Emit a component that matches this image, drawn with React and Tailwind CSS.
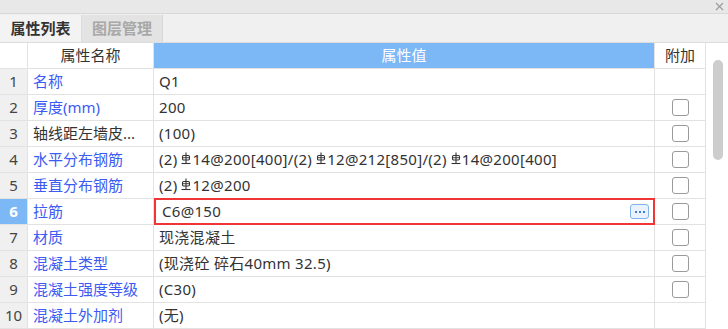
import React from "react";

const Steel = () => (
  <svg width="10" height="14" viewBox="0 0 10 14" className="inline-block align-[-1px] ml-[4px] mr-[1px]">
    <line x1="5" y1="0.5" x2="5" y2="11" stroke="#333" strokeWidth="1.1" />
    <rect x="1.5" y="3.5" width="7" height="4.5" rx="1.2" fill="none" stroke="#333" strokeWidth="1.1" />
    <line x1="1.5" y1="5.7" x2="8.5" y2="5.7" stroke="#333" strokeWidth="0.9" />
    <line x1="0.5" y1="11.5" x2="9.5" y2="11.5" stroke="#333" strokeWidth="1.1" />
  </svg>
);

const rows = [
  { n: "1", name: "名称", blue: true, value: "Q1", cb: false },
  { n: "2", name: "厚度(mm)", blue: true, value: "200", cb: true },
  { n: "3", name: "轴线距左墙皮...", blue: false, value: "(100)", cb: true },
  {
    n: "4",
    name: "水平分布钢筋",
    blue: true,
    value: (
      <>
        (2)<Steel />14@200[400]/(2)<Steel />12@212[850]/(2)<Steel />14@200[400]
      </>
    ),
    cb: true,
  },
  { n: "5", name: "垂直分布钢筋", blue: true, value: (<>(2)<Steel />12@200</>), cb: true },
  { n: "6", name: "拉筋", blue: true, value: "C6@150", cb: true, sel: true },
  { n: "7", name: "材质", blue: true, value: "现浇混凝土", cb: true },
  { n: "8", name: "混凝土类型", blue: true, value: "(现浇砼 碎石40mm 32.5)", cb: true },
  { n: "9", name: "混凝土强度等级", blue: true, value: "(C30)", cb: true },
  { n: "10", name: "混凝土外加剂", blue: true, value: "(无)", cb: false },
];

const Checkbox = () => (
  <div className="w-[17px] h-[17px] rounded-[3px] border border-[#9a9a9a] bg-white" />
);

export default function App() {
  return (
    <div className="w-[728px] h-[329px] overflow-hidden bg-white text-[15px] text-[#333] font-['Noto_Sans','Noto_Sans_CJK_SC',sans-serif] leading-none flex flex-col">
      {/* title bar */}
      <div className="h-[14px] bg-[#e8e8e8] border-b border-[#d8d8d8] flex items-center justify-end pr-[4px] shrink-0">
        <svg width="9" height="9" viewBox="0 0 9 9">
          <path d="M1 1L8 8M8 1L1 8" stroke="#9a9a9a" strokeWidth="1.1" />
        </svg>
      </div>
      {/* tabs */}
      <div className="h-[29px] bg-[#f0f0f0] border-b border-[#dcdcdc] flex items-stretch shrink-0 pt-[1px]">
        <div className="w-[82px] flex items-center justify-center font-bold text-[#333] bg-[#f3f3f3] border-r border-[#dcdcdc]">
          属性列表
        </div>
        <div className="w-[81px] flex items-center justify-center font-bold text-[#a8a8a8] bg-[#e3e3e3] border-r border-[#d6d6d6]">
          图层管理
        </div>
      </div>
      {/* table + scrollbar */}
      <div className="flex flex-1 min-h-0">
        <div className="w-[706px] flex flex-col">
          {/* header */}
          <div className="h-[26px] flex border-b border-[#e2e2e2] shrink-0">
            <div className="w-[28px] border-r border-[#e2e2e2] bg-white" />
            <div className="w-[126px] border-r border-[#e2e2e2] flex items-center justify-center text-[#333]">
              属性名称
            </div>
            <div className="w-[501px] bg-[#7db8f6] border-r border-[#e2e2e2] flex items-center justify-center text-white">
              属性值
            </div>
            <div className="w-[51px] flex items-center justify-center text-[#333] border-r border-[#e2e2e2]">
              附加
            </div>
          </div>
          {rows.map((r) => (
            <div key={r.n} className="h-[26px] flex border-b border-[#e2e2e2] shrink-0">
              <div
                className={
                  r.sel
                    ? "w-[28px] border-r border-[#e2e2e2] bg-[#7db8f6] text-white font-bold flex items-center justify-center"
                    : "w-[28px] border-r border-[#e2e2e2] bg-[#f0f0f0] text-[#444] flex items-center justify-center"
                }
              >
                {r.n}
              </div>
              <div
                className={
                  r.blue
                    ? "w-[126px] border-r border-[#e2e2e2] flex items-center pl-[5px] text-[#3b5bf2] whitespace-nowrap overflow-hidden"
                    : "w-[126px] border-r border-[#e2e2e2] flex items-center pl-[5px] text-[#333] whitespace-nowrap overflow-hidden"
                }
              >
                {r.name}
              </div>
              {r.sel ? (
                <div className="w-[501px] border-2 border-[#ef3535] -my-[1px] h-[27px] flex items-center justify-between pl-[6px] pr-[4px] bg-white tracking-[0.3px]">
                  <span>{r.value}</span>
                  <div className="w-[19px] h-[15px] rounded-[3px] border border-[#7fb3ef] bg-[#eaf3fd] flex items-center justify-center gap-[2px]">
                    <span className="w-[2px] h-[2px] bg-[#3a7fd8]" />
                    <span className="w-[2px] h-[2px] bg-[#3a7fd8]" />
                    <span className="w-[2px] h-[2px] bg-[#3a7fd8]" />
                  </div>
                </div>
              ) : (
                <div className="w-[501px] border-r border-[#e2e2e2] flex items-center pl-[5px] whitespace-nowrap text-[#333] tracking-[0.3px]">
                  <span>{r.value}</span>
                </div>
              )}
              <div className="w-[51px] border-r border-[#e2e2e2] flex items-center justify-center">
                {r.cb && <Checkbox />}
              </div>
            </div>
          ))}
        </div>
        <div className="w-[22px] bg-white pt-[17px] pl-[7px]">
          <div className="w-[10px] h-[100px] rounded-full bg-[#cdcdcd]" />
        </div>
      </div>
    </div>
  );
}
